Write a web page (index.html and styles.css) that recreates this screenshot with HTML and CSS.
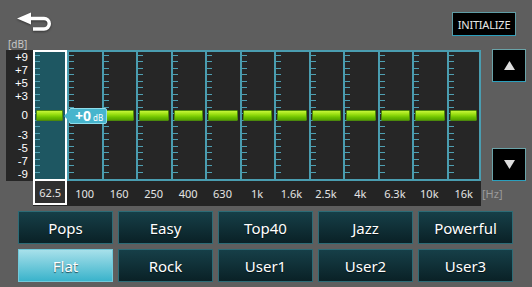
FILE: index.html
```html
<!DOCTYPE html>
<html lang="en">
<head>
    <meta charset="UTF-8">
    <title>Equalizer</title>
    <link rel="stylesheet" href="styles.css">
</head>
<body>
    <div class="screen">
        <div class="header">
            <div class="back">
                <svg width="40" height="28" viewBox="0 0 40 28">
                    <polygon points="3,11.5 17,5.5 17,17.5" fill="#fff"/>
                    <path d="M16 11.5 H30 a5.25 5.25 0 0 1 0 10.5 H19" stroke="#fff" stroke-width="3.5" fill="none"/>
                </svg>
            </div>
            <button class="init">INITIALIZE</button>
        </div>

        <div class="eq">
            <div class="unit-db">[dB]</div>
            <div class="scale">
                <span>+9</span><span>+7</span><span>+5</span><span>+3</span>
                <span class="zero">0</span>
                <span>-3</span><span>-5</span><span>-7</span><span>-9</span>
            </div>
            <div class="bands">
                <div class="col sel"><div class="knob"></div></div>
                <div class="col"><div class="knob"></div></div>
                <div class="col"><div class="knob"></div></div>
                <div class="col"><div class="knob"></div></div>
                <div class="col"><div class="knob"></div></div>
                <div class="col"><div class="knob"></div></div>
                <div class="col"><div class="knob"></div></div>
                <div class="col"><div class="knob"></div></div>
                <div class="col"><div class="knob"></div></div>
                <div class="col"><div class="knob"></div></div>
                <div class="col"><div class="knob"></div></div>
                <div class="col"><div class="knob"></div></div>
                <div class="col last"><div class="knob"></div></div>
                <div class="tip"><b>+0</b><small>dB</small></div>
            </div>
            <div class="side">
                <button class="arrow">
                    <svg width="11" height="9" viewBox="0 0 11 9"><polygon points="5.5,0 11,9 0,9" fill="#ddd"/></svg>
                </button>
                <button class="arrow">
                    <svg width="11" height="9" viewBox="0 0 11 9"><polygon points="0,0 11,0 5.5,9" fill="#ddd"/></svg>
                </button>
            </div>
            <div class="freqs">
                <span class="sel">62.5</span><span>100</span><span>160</span><span>250</span>
                <span>400</span><span>630</span><span>1k</span><span>1.6k</span>
                <span>2.5k</span><span>4k</span><span>6.3k</span><span>10k</span><span>16k</span>
            </div>
            <div class="unit-hz">[Hz]</div>
        </div>

        <div class="presets">
            <button class="preset">Pops</button>
            <button class="preset">Easy</button>
            <button class="preset">Top40</button>
            <button class="preset">Jazz</button>
            <button class="preset">Powerful</button>
            <button class="preset active">Flat</button>
            <button class="preset">Rock</button>
            <button class="preset">User1</button>
            <button class="preset">User2</button>
            <button class="preset">User3</button>
        </div>
    </div>
</body>
</html>
```

FILE: styles.css
```css
body {
    margin: 0;
    background-color: #5e5e5e;
    font-family: 'Noto Sans', 'Open Sans', sans-serif;
    color: #fff;
}

.screen {
    width: 532px;
    height: 287px;
    overflow: hidden;
}

button {
    font-family: inherit;
    cursor: pointer;
}

/* top bar */
.header {
    height: 39px;
    display: flex;
    justify-content: space-between;
    align-items: flex-start;
}

.back {
    flex: none;
    width: 40px;
    height: 28px;
    margin: 7px 0 0 14px;
}

.back svg {
    display: block;
    filter: drop-shadow(0 1px 1px rgba(0, 0, 0, 0.45));
}

.init {
    margin: 12px 16px 0 0;
    width: 64px;
    height: 24px;
    padding: 0;
    background: #000;
    border: 1px solid #5f9da6;
    border-bottom-color: #2a9fbd;
    color: #e8e8e8;
    font-size: 11px;
    letter-spacing: -0.2px;
}

/* equalizer area */
.eq {
    display: grid;
    grid-template-columns: 27px 448px 11px 34px;
    grid-template-rows: 11px 131px 25px;
    padding-left: 6px;
}

.unit-db {
    grid-column: 1;
    grid-row: 1;
    font-size: 10px;
    line-height: 11px;
    color: #c8c8c8;
    padding-left: 2px;
}

.scale {
    grid-column: 1;
    grid-row: 2;
    background: #262626;
    display: flex;
    flex-direction: column;
    align-items: flex-end;
    padding: 0.5px 5px 0 0;
    font-family: 'Liberation Sans', sans-serif;
    font-size: 11.5px;
}

.scale span {
    line-height: 13px;
    height: 13px;
}

.scale .zero {
    margin: 6.5px 0;
}

.bands {
    grid-column: 2;
    grid-row: 2;
    display: grid;
    grid-template-columns: repeat(13, 1fr);
    position: relative;
}

.col {
    box-sizing: border-box;
    border-top: 2px solid #4a9db0;
    border-bottom: 2px solid #4a9db0;
    border-left: 2px solid #4a9db0;
    background-color: #262626;
    background-image: repeating-linear-gradient(to bottom, transparent 0, transparent 3px, #4f9fb1 3px, #4f9fb1 4px, transparent 4px, transparent 6.5px);
    background-size: 5px 124px;
    background-repeat: no-repeat;
    display: flex;
    align-items: center;
}

.col.last {
    border-right: 2px solid #4a9db0;
}

.col.sel {
    border: 2px solid #fff;
    background-color: #1e5762;
}

.knob {
    height: 11px;
    width: calc(100% - 3px);
    margin-left: 1px;
    box-sizing: border-box;
    border: 1px solid #4d8a0c;
    border-radius: 1px;
    background: linear-gradient(to bottom, #c6f53a 0%, #9be012 35%, #6cc000 70%, #55a200 100%);
}

.tip {
    position: absolute;
    left: 31px;
    top: 58px;
    height: 14px;
    padding: 0 3px 0 5px;
    margin-left: 5px;
    background: #47b5cd;
    border: 1px solid #8fdceb;
    border-radius: 2px;
    display: flex;
    align-items: baseline;
    gap: 2px;
    line-height: 14px;
}

.tip::before {
    content: "";
    position: absolute;
    left: -6px;
    top: 1px;
    border-style: solid;
    border-width: 6px 6px 6px 0;
    border-color: transparent #47b5cd transparent transparent;
}

.tip b {
    font-size: 14px;
}

.tip small {
    font-size: 8px;
}

.side {
    grid-column: 4;
    grid-row: 2;
    display: flex;
    flex-direction: column;
    justify-content: space-between;
    margin-top: -1px;
}

.arrow {
    width: 34px;
    height: 33px;
    padding: 0;
    background: #000;
    border: 1px solid #6aa3a8;
    border-bottom-color: #2a9fbd;
    display: flex;
    align-items: center;
    justify-content: center;
}

.freqs {
    grid-column: 2;
    grid-row: 3;
    display: grid;
    grid-template-columns: repeat(13, 1fr);
    background: #242424;
    font-size: 11px;
    color: #e4e4e4;
}

.freqs span {
    display: flex;
    align-items: center;
    justify-content: center;
}

.freqs .sel {
    border: 2px solid #fff;
    border-top: none;
    height: 22px;
    background: #303030;
}

.unit-hz {
    grid-column: 3 / 5;
    grid-row: 3;
    font-size: 11px;
    color: #9a9a9a;
    padding: 5px 0 0 1px;
}

/* preset buttons */
.presets {
    display: grid;
    grid-template-columns: repeat(5, 95px);
    grid-auto-rows: 33px;
    gap: 5px;
    padding: 5px 0 0 18px;
}

.preset {
    padding: 0;
    border: 1px solid #2c6b76;
    background: linear-gradient(to bottom, #163f48, #0a2126);
    color: #fff;
    font-size: 15px;
    text-shadow: 0 1px 1px rgba(0, 0, 0, 0.6);
}

.preset.active {
    border-color: #72cadb;
    background: linear-gradient(to bottom, #a7e0ea, #3ab3cb);
}
```
